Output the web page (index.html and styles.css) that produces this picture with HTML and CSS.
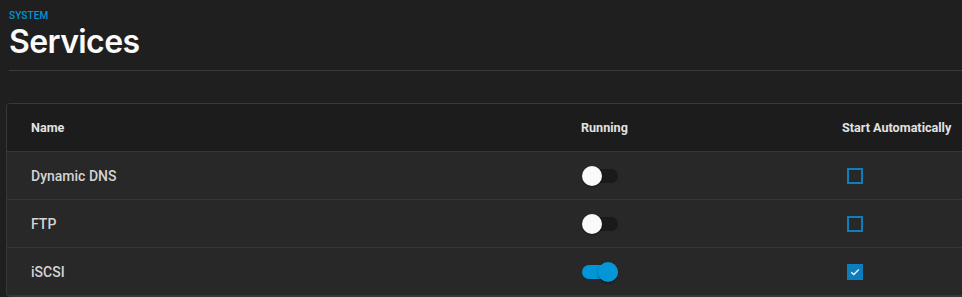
FILE: index.html
```html
<!DOCTYPE html>
<html lang="en">
  <head>
    <meta charset="UTF-8" />
    <title>Services</title>
    <link rel="stylesheet" href="styles.css">
  </head>
  <body>
    <div class="page">
      <div class="page-head">
        <div class="crumb">SYSTEM</div>
        <h1 class="title">Services</h1>
      </div>
      <div class="divider"></div>

      <div class="card">
        <div class="row row-head">
          <div class="cell">Name</div>
          <div class="cell">Running</div>
          <div class="cell">Start Automatically</div>
        </div>
        <div class="row">
          <div class="cell">Dynamic DNS</div>
          <div class="cell"><span class="toggle"><span class="thumb"></span></span></div>
          <div class="cell"><span class="check"></span></div>
        </div>
        <div class="row">
          <div class="cell">FTP</div>
          <div class="cell"><span class="toggle"><span class="thumb"></span></span></div>
          <div class="cell"><span class="check"></span></div>
        </div>
        <div class="row">
          <div class="cell">iSCSI</div>
          <div class="cell"><span class="toggle on"><span class="thumb"></span></span></div>
          <div class="cell">
            <span class="check checked">
              <svg width="10" height="8" viewBox="0 0 10 8"><path d="M1.2 4.2 L3.8 6.6 L8.8 1.4" fill="none" stroke="#e8f4fb" stroke-width="1.4"/></svg>
            </span>
          </div>
        </div>
      </div>
    </div>
  </body>
</html>
```

FILE: styles.css
```css
html, body {
  margin: 0;
  background: #1f1f1f;
  overflow: hidden;
}

body {
  font-family: Roboto, "Liberation Sans", sans-serif;
  color: #d8d8d8;
}

.page {
  padding: 10px 0 0 6px;
  width: 1100px;
}

.page-head {
  padding-left: 3px;
}

.crumb {
  color: #0095d5;
  font-size: 10px;
  line-height: 12px;
  font-weight: 500;
  letter-spacing: 0.1px;
}

.title {
  margin: 0;
  font-family: Inter, "Liberation Sans", sans-serif;
  font-size: 32px;
  font-weight: 600;
  line-height: 40px;
  color: #fafafa;
  letter-spacing: -0.6px;
}

.divider {
  margin: 8px 0 0 3px;
  height: 1px;
  background: #3a3a3a;
}

.card {
  margin-top: 32px;
  border: 1px solid #383838;
  border-radius: 4px;
  background: #282828;
  overflow: hidden;
}

.row {
  display: grid;
  grid-template-columns: 550px 261px 1fr;
  align-items: center;
  height: 47px;
  padding-left: 24px;
  border-bottom: 1px solid #363636;
  font-size: 14px;
  font-weight: 500;
  color: #d4d4d4;
}

.row-head {
  background: #1c1c1c;
  font-weight: 700;
  font-size: 12.6px;
  color: #e2e2e2;
}

.cell {
  display: flex;
  align-items: center;
}

.toggle {
  position: relative;
  display: block;
  width: 36px;
  height: 14px;
  border-radius: 7px;
  background: #1a1a1a;
  margin-left: 1px;
}

.toggle .thumb {
  position: absolute;
  top: -3px;
  left: 0;
  width: 20px;
  height: 20px;
  border-radius: 50%;
  background: #fafafa;
  box-shadow: 0 1px 2px rgba(0, 0, 0, 0.4);
}

.toggle.on {
  background: #0095d5;
}

.toggle.on .thumb {
  left: 16px;
  background: #0596d7;
}

.check {
  display: flex;
  align-items: center;
  justify-content: center;
  box-sizing: border-box;
  width: 16px;
  height: 16px;
  margin-left: 5px;
  border: 2px solid #0d7dbc;
}

.check.checked {
  background: #0d7dbc;
}
```
